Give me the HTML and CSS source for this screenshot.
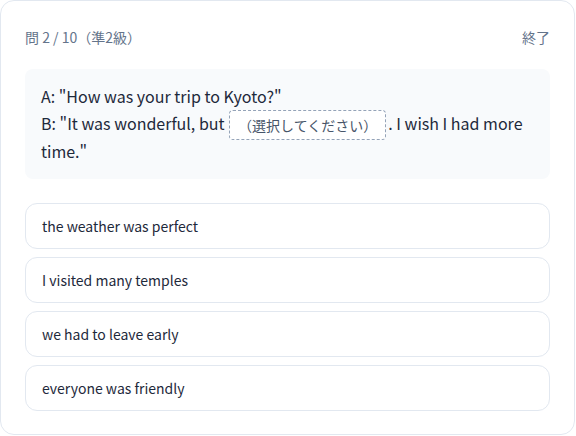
FILE: index.html
```html
<!DOCTYPE html>
<html lang="ja">
<head>
<meta charset="utf-8">
<link rel="stylesheet" href="styles.css">
</head>
<body>
<div class="card">
  <div class="header">
    <span class="progress">問 2 / 10（準2級）</span>
    <span class="quit">終了</span>
  </div>
  <div class="passage">A: "How was your trip to Kyoto?"<br>B: "It was wonderful, but <span class="blank">（選択してください）</span>. I wish I had more time."</div>
  <div class="options">
    <div class="option">the weather was perfect</div>
    <div class="option">I visited many temples</div>
    <div class="option">we had to leave early</div>
    <div class="option">everyone was friendly</div>
  </div>
</div>
</body>
</html>
```
FILE: styles.css
```css
html, body {
  margin: 0;
  padding: 0;
  background: #ffffff;
}
body {
  font-family: "Noto Sans CJK JP", "Noto Sans", sans-serif;
  color: #1e293b;
}
.card {
  box-sizing: border-box;
  width: 575px;
  height: 435px;
  border: 1px solid #e2e8f0;
  border-radius: 14px;
  padding: 24px 24px 24px 24px;
  background: #fff;
}
.header {
  display: flex;
  justify-content: space-between;
  align-items: center;
  height: 24px;
  margin-bottom: 20px;
  font-size: 14px;
  color: #64748b;
}
.passage {
  background: #f8fafc;
  border-radius: 8px;
  padding: 14px 16px;
  font-size: 16px;
  line-height: 27.4px;
  color: #1e293b;
  margin-bottom: 24px;
}
.blank {
  display: inline-block;
  box-sizing: border-box;
  height: 30px;
  line-height: 28px;
  padding: 0 8px;
  margin: -4px 2px -2px 1px;
  border: 1px dashed #94a3b8;
  border-radius: 4px;
  background: #fff;
  font-size: 14px;
  color: #475569;
  vertical-align: middle;
}
.options {
  display: flex;
  flex-direction: column;
  gap: 8px;
}
.option {
  box-sizing: border-box;
  height: 46px;
  display: flex;
  align-items: center;
  padding: 0 16px;
  border: 1px solid #e2e8f0;
  border-radius: 12px;
  font-size: 14px;
  color: #1e293b;
}
```
